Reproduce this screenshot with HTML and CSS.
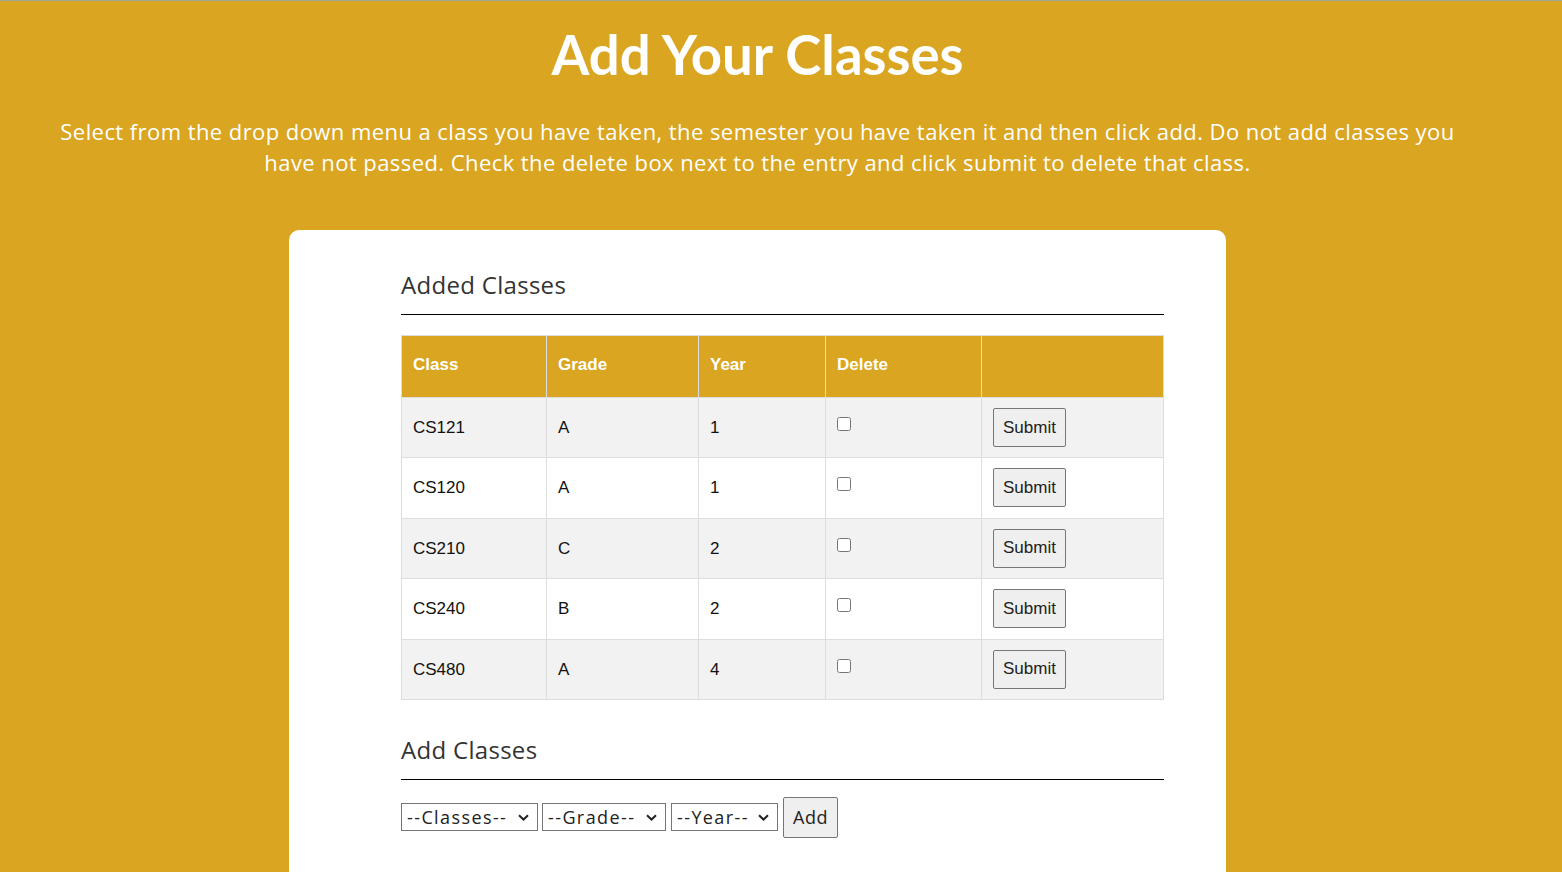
FILE: index.html
```html
<!DOCTYPE html>
<html>
<head>
<meta charset="utf-8">
<title>Add Your Classes</title>
<link rel="stylesheet" href="styles.css">
</head>
<body>
<header class="intro">
  <h1 class="title">Add Your Classes</h1>
  <p class="lead">Select from the drop down menu a class you have taken, the semester you have taken it and then click add. Do not add classes you<br>have not passed. Check the delete box next to the entry and click submit to delete that class.</p>
</header>
<main class="card">
  <h2 class="section-title">Added Classes</h2>
  <hr class="rule">
  <table class="classes">
    <thead>
      <tr><th class="c1">Class</th><th class="c2">Grade</th><th class="c3">Year</th><th class="c4">Delete</th><th class="c5"></th></tr>
    </thead>
    <tbody>
      <tr><td>CS121</td><td>A</td><td>1</td><td class="chk"><input type="checkbox"></td><td><button class="submit">Submit</button></td></tr>
      <tr><td>CS120</td><td>A</td><td>1</td><td class="chk"><input type="checkbox"></td><td><button class="submit">Submit</button></td></tr>
      <tr><td>CS210</td><td>C</td><td>2</td><td class="chk"><input type="checkbox"></td><td><button class="submit">Submit</button></td></tr>
      <tr><td>CS240</td><td>B</td><td>2</td><td class="chk"><input type="checkbox"></td><td><button class="submit">Submit</button></td></tr>
      <tr><td>CS480</td><td>A</td><td>4</td><td class="chk"><input type="checkbox"></td><td><button class="submit">Submit</button></td></tr>
    </tbody>
  </table>
  <h2 class="section-title second">Add Classes</h2>
  <hr class="rule rule-tight">
  <form class="add-form">
    <span class="sel-wrap sel-class">
      <select class="sel"><option>--Classes--</option></select>
      <svg class="chev" width="11" height="7" viewBox="0 0 11 7"><path d="M1 1.2 L5.5 5.5 L10 1.2" fill="none" stroke="#222" stroke-width="2"/></svg>
    </span>
    <span class="sel-wrap sel-grade">
      <select class="sel"><option>--Grade--</option></select>
      <svg class="chev" width="11" height="7" viewBox="0 0 11 7"><path d="M1 1.2 L5.5 5.5 L10 1.2" fill="none" stroke="#222" stroke-width="2"/></svg>
    </span>
    <span class="sel-wrap sel-year">
      <select class="sel"><option>--Year--</option></select>
      <svg class="chev" width="11" height="7" viewBox="0 0 11 7"><path d="M1 1.2 L5.5 5.5 L10 1.2" fill="none" stroke="#222" stroke-width="2"/></svg>
    </span>
    <button type="button" class="add">Add</button>
  </form>
</main>
</body>
</html>
```

FILE: styles.css
```css
html, body {
  margin: 0;
  padding: 0;
}
html {
  background: #daa520;
  border-top: 1px solid #9ea79a;
  height: 871px;
  overflow: hidden;
}
body {
  font-family: "Open Sans", "Noto Sans", sans-serif;
  width: 1515px;
}
.intro {
  text-align: center;
  color: #fff;
}
.title {
  font-family: "Lato", "Noto Sans", sans-serif;
  font-weight: 700;
  font-size: 54.5px;
  line-height: 60px;
  margin: 23px 0 0;
}
.lead {
  font-family: "Open Sans", sans-serif;
  font-size: 22px;
  letter-spacing: 0.43px;
  line-height: 31px;
  margin: 32px 0 0;
}
.card {
  background: #fff;
  border-radius: 10px;
  margin: 52px auto 0;
  width: 937px;
  box-sizing: border-box;
  padding: 39px 62px 40px 112px;
  min-height: 700px;
}
.section-title {
  font-family: "Open Sans", sans-serif;
  font-weight: 400;
  font-size: 24px;
  letter-spacing: 0.3px;
  line-height: 32px;
  color: #333;
  margin: 0;
}
.section-title.second {
  margin-top: 34px;
}
.rule {
  border: 0;
  border-top: 1px solid #000;
  margin: 13px 0 20px;
}
.rule-tight {
  margin-bottom: 17px;
}
.classes {
  border-collapse: collapse;
  width: 763px;
  font-family: "Liberation Sans", Arial, sans-serif;
  font-size: 17px;
  color: #111;
}
.classes th, .classes td {
  border: 1px solid #ddd;
  text-align: left;
  padding: 10px 11px 10.4px;
  line-height: 19px;
}
.classes th {
  background: #daa520;
  color: #fff;
  font-weight: 700;
  padding-top: 19px;
  padding-bottom: 23px;
}
.c1 { width: 122px; }
.c2 { width: 129px; }
.c3 { width: 104px; }
.c4 { width: 133px; }
.classes tbody tr:nth-child(odd) { background: #f2f2f2; }
.classes tbody tr:nth-child(even) { background: #fff; }
.chk input {
  margin: 0;
  width: 14px;
  height: 14px;
  vertical-align: 3px;
}
.submit {
  font-family: "Liberation Sans", Arial, sans-serif;
  font-size: 17px;
  color: #222;
  background: #efefef;
  border: 1px solid #767676;
  border-radius: 2px;
  height: 39px;
  padding: 0 9px;
  vertical-align: middle;
}
.add-form {
  display: flex;
  align-items: center;
  gap: 4px;
  margin: 0;
}
.sel-wrap {
  position: relative;
  display: block;
  height: 28px;
}
.sel {
  appearance: none;
  -webkit-appearance: none;
  font-family: "Open Sans", sans-serif;
  font-size: 18px;
  letter-spacing: 1.4px;
  line-height: 26px;
  color: #222;
  width: 100%;
  height: 28px;
  border: 1px solid #767676;
  border-radius: 0;
  background: #fff;
  padding: 0 0 0 5px;
  margin: 0;
}
.chev {
  position: absolute;
  right: 9px;
  top: 11px;
  pointer-events: none;
}
.sel-class { width: 137px; }
.sel-grade { width: 124px; }
.sel-year { width: 107px; margin-left: 1px; }
.add {
  font-family: "Open Sans", sans-serif;
  font-size: 18px;
  letter-spacing: 0.5px;
  color: #222;
  background: #efefef;
  border: 1px solid #767676;
  border-radius: 2px;
  height: 41px;
  width: 55px;
  padding: 0;
  margin-left: 1px;
}
```
